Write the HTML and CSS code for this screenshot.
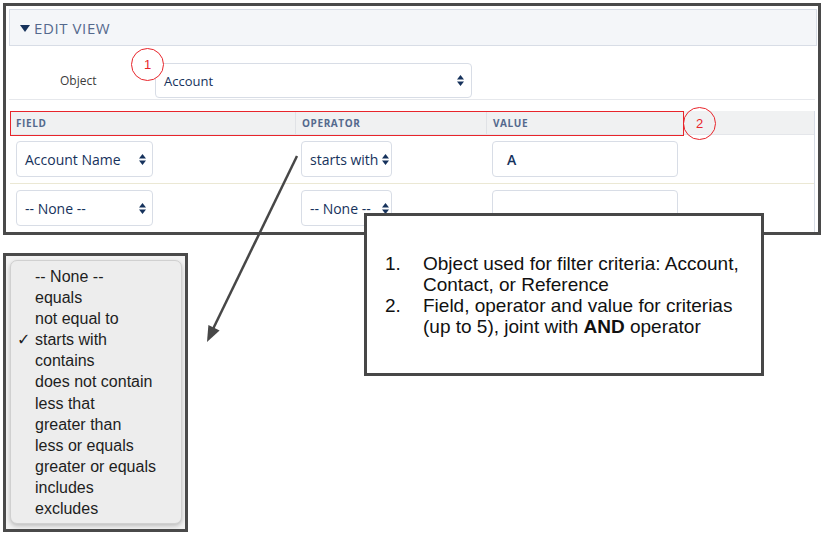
FILE: index.html
```html
<!DOCTYPE html>
<html>
<head>
<meta charset="utf-8">
<link rel="stylesheet" href="styles.css">
</head>
<body>
<div class="page">
  <div class="main">
    <div class="section-head">
      <svg class="caret" width="10" height="7" viewBox="0 0 10 7"><path d="M0 0 H10 L5 7 Z" fill="#16325c"/></svg>
      <span>Edit View</span>
    </div>
    <div class="object-row">
      <div class="object-label">Object</div>
      <div class="select select-object"><span>Account</span>
        <svg class="updown" width="7" height="11" viewBox="0 0 7 11"><path d="M3.5 0 L7 4.5 H0 Z M0 6.5 H7 L3.5 11 Z" fill="#16325c"/></svg>
      </div>
    </div>
    <div class="criteria">
      <div class="crow chead">
        <div class="cell c-field">Field</div>
        <div class="cell c-op">Operator</div>
        <div class="cell c-val">Value</div>
      </div>
      <div class="crow">
        <div class="cell c-field"><div class="select sel-field"><span>Account Name</span><svg class="updown" width="7" height="11" viewBox="0 0 7 11"><path d="M3.5 0 L7 4.5 H0 Z M0 6.5 H7 L3.5 11 Z" fill="#16325c"/></svg></div></div>
        <div class="cell c-op"><div class="select sel-op"><span>starts with</span><svg class="updown" width="7" height="11" viewBox="0 0 7 11"><path d="M3.5 0 L7 4.5 H0 Z M0 6.5 H7 L3.5 11 Z" fill="#16325c"/></svg></div></div>
        <div class="cell c-val"><div class="input">A</div></div>
      </div>
      <div class="crow">
        <div class="cell c-field"><div class="select sel-field"><span>-- None --</span><svg class="updown" width="7" height="11" viewBox="0 0 7 11"><path d="M3.5 0 L7 4.5 H0 Z M0 6.5 H7 L3.5 11 Z" fill="#16325c"/></svg></div></div>
        <div class="cell c-op"><div class="select sel-op"><span>-- None --</span><svg class="updown" width="7" height="11" viewBox="0 0 7 11"><path d="M3.5 0 L7 4.5 H0 Z M0 6.5 H7 L3.5 11 Z" fill="#16325c"/></svg></div></div>
        <div class="cell c-val"><div class="input"></div></div>
      </div>
    </div>
  </div>

  <div class="menu-frame">
    <ul class="menu">
      <li>-- None --</li>
      <li>equals</li>
      <li>not equal to</li>
      <li class="checked"><span class="check">✓</span>starts with</li>
      <li>contains</li>
      <li>does not contain</li>
      <li>less that</li>
      <li>greater than</li>
      <li>less or equals</li>
      <li>greater or equals</li>
      <li>includes</li>
      <li>excludes</li>
    </ul>
  </div>

  <div class="mark mark-1">1</div>
  <div class="redbox"></div>
  <div class="mark mark-2">2</div>

  <svg class="arrow" width="824" height="534" viewBox="0 0 824 534">
    <line x1="297" y1="156" x2="213" y2="329" stroke="#474747" stroke-width="2.5"/>
    <polygon points="207,342 219.6,330.5 208.4,325" fill="#474747"/>
  </svg>

  <div class="callout">
    <ol>
      <li><span class="num">1.</span><span>Object used for filter criteria: Account, Contact, or Reference</span></li>
      <li><span class="num">2.</span><span>Field, operator and value for criterias (up to 5), joint with <b>AND</b> operator</span></li>
    </ol>
  </div>
</div>
</body>
</html>
```

FILE: styles.css
```css
* { box-sizing: border-box; }
html, body { margin: 0; padding: 0; background: #fff; }
body { width: 824px; height: 534px; overflow: hidden; font-family: "Open Sans", "Liberation Sans", sans-serif; }
.page { position: relative; width: 824px; height: 534px; padding: 3px 3px 0 3px; }

.main {
  width: 818px; height: 232px;
  border: 3px solid #4a4a4a;
  padding: 3px 1px 0 3px;
  overflow: hidden;
  background: #fff;
}
.section-head {
  height: 37px;
  background: #f4f6f9;
  border: 1px solid #d8dde6;
  display: flex; align-items: center;
  padding-left: 10px;
  color: #54698d;
  font-size: 15px;
  letter-spacing: 0.6px;
  text-transform: uppercase;
}
.caret { margin-right: 4px; margin-top: 1px; }

.object-row {
  display: grid;
  grid-template-columns: 146px 317px;
  align-items: center;
  padding: 17px 0 1px 0;
  margin-right: 2px;
  border-bottom: 1px solid #e6e8ec;
}
.object-label { padding-left: 51px; font-size: 12px; color: #3c3c3c; }

.select {
  height: 35px;
  border: 1px solid #d8dde6;
  border-radius: 4px;
  background: #fff;
  display: flex; align-items: center; justify-content: space-between;
  color: #16325c;
  font-size: 14px;
}
.select-object { padding: 0 7px 0 8px; font-size: 13px; }
.sel-field { width: 137px; height: 36px; padding: 0 6px 0 8px; }
.sel-op { width: 91px; height: 36px; padding: 0 2px 0 8px; white-space: nowrap; }
.updown { flex: none; }

.criteria {
  margin: 11px 2px 0 1px;
  border-right: 1px solid #d8dde6;
}
.crow {
  display: grid;
  grid-template-columns: 285px 191px 1fr;
  border-bottom: 1px solid #ebe8d4;
}
.chead {
  height: 24px;
  background: #f0f1f2;
  border-bottom: 1px solid #e4e6ea;
  align-items: center;
}
.chead .cell {
  font-size: 10px; font-weight: 700;
  color: #54698d; letter-spacing: 0.6px;
  text-transform: uppercase;
  padding-left: 5px;
  height: 100%;
  display: flex; align-items: center;
}
.chead .c-op, .chead .c-val { border-left: 1px solid #e0e2e6; padding-left: 6px; }
.crow .cell { padding: 6px 0 6px 6px; }
.chead .cell { padding-top: 0; padding-bottom: 0; }
.input {
  width: 186px; height: 36px;
  border: 1px solid #d8dde6; border-radius: 4px;
  padding-left: 14px;
  display: flex; align-items: center;
  color: #16325c; font-size: 14px; font-weight: 600;
}

.menu-frame {
  margin-top: 18px;
  width: 185px; height: 279px;
  border: 3px solid #4a4a4a;
  padding: 4px 3px 4px 4px;
  background: #f2f2f2;
}
.menu {
  list-style: none; margin: 0;
  height: 264px;
  padding: 5px 0 0 24px;
  background: #ededed;
  border: 1px solid #d0d0d0;
  border-radius: 7px;
  box-shadow: 0 2px 4px rgba(0,0,0,0.22);
  font-family: "Liberation Sans", Arial, sans-serif;
  font-size: 16px;
  color: #1e1e1e;
}
.menu li { height: 21.1px; line-height: 21px; position: relative; white-space: nowrap; }
.check { position: absolute; left: -18px; font-size: 16px; font-weight: 700; font-family: "DejaVu Sans", sans-serif; }

.mark {
  position: absolute;
  width: 33px; height: 33px;
  border: 1.5px solid #e8252b; border-radius: 50%;
  background: #fff;
  color: #e8252b;
  font-family: "Liberation Sans", Arial, sans-serif; font-size: 13px;
  display: flex; align-items: center; justify-content: center;
}
.mark-1 { left: 131px; top: 48px; }
.mark-2 { left: 683px; top: 107px; background: transparent; }
.redbox {
  position: absolute;
  left: 10px; top: 111px; width: 674px; height: 25px;
  border: 1.5px solid #e8252b;
}
.arrow { position: absolute; left: 0; top: 0; pointer-events: none; }

.callout {
  position: absolute;
  left: 364px; top: 213px;
  width: 400px; height: 163px;
  border: 3px solid #474747;
  background: #fff;
  display: flex; align-items: center;
  font-family: "Liberation Sans", Arial, sans-serif;
  font-size: 19px; line-height: 21px; color: #111;
}
.callout ol { list-style: none; margin: 0; padding: 0 12px 0 16px; }
.callout li { display: grid; grid-template-columns: 40px 1fr; }
.callout .num { padding-left: 2px; }
```
